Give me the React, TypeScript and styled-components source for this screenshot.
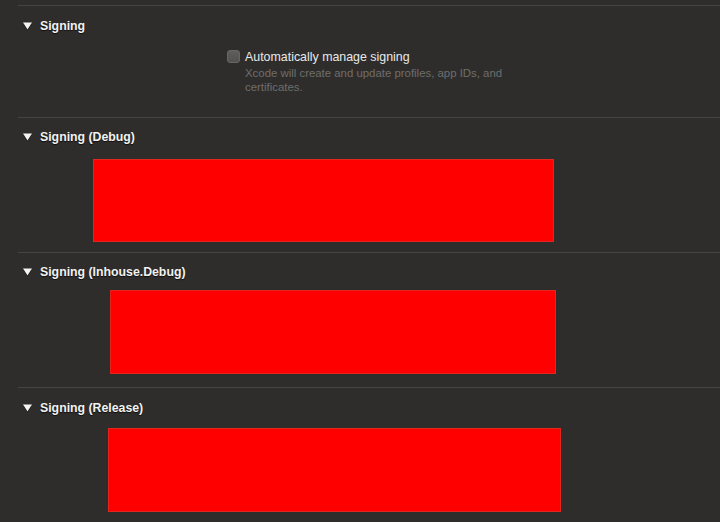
import React from "react";
import styled, { createGlobalStyle } from "styled-components";

const GlobalStyle = createGlobalStyle`
  html, body {
    margin: 0;
    padding: 0;
    background: #2e2d2b;
  }
  body {
    font-family: "Liberation Sans", Arial, sans-serif;
    -webkit-font-smoothing: antialiased;
  }
`;

const Page = styled.div`
  width: 720px;
  height: 522px;
  overflow: hidden;
  padding-top: 5px;
  box-sizing: border-box;
  background: #2e2d2b;
`;

const Section = styled.section<{ $pb: number }>`
  margin-left: 18px;
  border-top: 1px solid #454442;
  padding-bottom: ${({ $pb }) => $pb}px;
`;

const Header = styled.div<{ $pt: number }>`
  display: flex;
  align-items: center;
  gap: 8px;
  padding: ${({ $pt }) => $pt}px 0 0 5px;
  height: 16px;
  color: #f2f2f2;
  font-size: 12.3px;
  font-weight: 700;
  line-height: 16px;
  text-shadow: 0 1px 1px rgba(0, 0, 0, 0.7);
`;

const Disclosure = styled.svg`
  width: 9px;
  height: 8px;
  flex: none;
  filter: drop-shadow(0 1px 0 rgba(0, 0, 0, 0.6));
`;

const CheckRow = styled.div`
  display: flex;
  align-items: flex-start;
  gap: 5px;
  margin: 16px 0 0 209px;
`;

const Checkbox = styled.span`
  width: 11px;
  height: 11px;
  flex: none;
  border-radius: 3px;
  border: 1px solid #686765;
  background: linear-gradient(#5f5e5c, #52514f);
`;

const CheckText = styled.div`
  display: flex;
  flex-direction: column;
`;

const Label = styled.div`
  color: #e8e8e8;
  font-size: 12.4px;
  line-height: 14px;
`;

const Hint = styled.div`
  margin-top: 2px;
  width: 275px;
  color: #6e6d6b;
  font-size: 11.4px;
  line-height: 14px;
`;

const Placeholder = styled.div<{ $left: number; $top: number; $w: number; $h: number }>`
  margin: ${({ $top }) => $top}px 0 0 ${({ $left }) => $left}px;
  width: ${({ $w }) => $w}px;
  height: ${({ $h }) => $h}px;
  box-sizing: border-box;
  background: #ff0000;
  border: 1px solid #e3261d;
`;

const Triangle = () => (
  <Disclosure viewBox="0 0 9 8">
    <path d="M0 0.5 L9 0.5 L4.5 7.5 Z" fill="#f4f4f4" />
  </Disclosure>
);

const blocks = [
  { title: "Signing (Debug)", left: 75, top: 14, w: 461, h: 83, pt: 11, pb: 10 },
  { title: "Signing (Inhouse.Debug)", left: 92, top: 10, w: 446, h: 84, pt: 11, pb: 13 },
  { title: "Signing (Release)", left: 90, top: 12, w: 453, h: 84, pt: 12, pb: 20 },
];

export default function App() {
  return (
    <>
      <GlobalStyle />
      <Page>
        <Section $pb={23}>
          <Header $pt={12}>
            <Triangle />
            Signing
          </Header>
          <CheckRow>
            <Checkbox />
            <CheckText>
              <Label>Automatically manage signing</Label>
              <Hint>Xcode will create and update profiles, app IDs, and certificates.</Hint>
            </CheckText>
          </CheckRow>
        </Section>
        {blocks.map((b) => (
          <Section key={b.title} $pb={b.pb}>
            <Header $pt={b.pt}>
              <Triangle />
              {b.title}
            </Header>
            <Placeholder $left={b.left} $top={b.top} $w={b.w} $h={b.h} />
          </Section>
        ))}
      </Page>
    </>
  );
}
